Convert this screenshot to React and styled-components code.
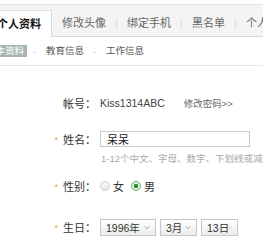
import styled, { createGlobalStyle } from 'styled-components';

const GlobalStyle = createGlobalStyle`
  html, body {
    margin: 0;
    padding: 0;
    background: #fff;
  }
  body {
    font-family: "Liberation Sans", "Noto Sans CJK SC", sans-serif;
    color: #333;
  }
`;

const Page = styled.div`
  width: 263px;
  height: 248px;
  overflow: hidden;
`;

const TabBar = styled.div`
  margin-top: 4px;
  height: 31px;
  display: flex;
  align-items: flex-end;
  background: #f4f4f4;
  border-top: 1px solid #e4e4e4;
  border-bottom: 1px solid #d8d8d8;
  white-space: nowrap;
`;

const Tab = styled.div`
  flex: none;
  height: 26px;
  line-height: 26px;
  padding: 0 10px;
  font-size: 11px;
  color: #666;
  ${(p) =>
    p.$active &&
    `
    margin-left: -13px;
    margin-bottom: -1px;
    background: #fff;
    color: #111;
    font-weight: bold;
    border-right: 1px solid #d8d8d8;
    border-top: 1px solid #e0e0e0;
    height: 26px;
  `}
`;

const TabSep = styled.span`
  flex: none;
  align-self: center;
  margin-top: 6px;
  width: 1px;
  height: 10px;
  background: #dedede;
`;

const SubNav = styled.div`
  height: 28px;
  display: flex;
  align-items: center;
  border-bottom: 1px solid #e8e8e8;
  white-space: nowrap;
  font-size: 9.5px;
`;

const SubItem = styled.span`
  flex: none;
  height: 12px;
  line-height: 12px;
  padding: 0 3px;
  color: ${(p) => (p.$active ? '#fff' : '#555')};
  background: ${(p) => (p.$active ? '#a7b6b5' : 'transparent')};
  margin-left: ${(p) => (p.$active ? '-17px' : '0')};
`;

const SubSep = styled.span`
  flex: none;
  width: 4px;
  margin: 0 6px;
  color: #ccc;
`;

const Form = styled.div`
  display: flex;
  flex-direction: column;
`;

const Row = styled.div`
  display: flex;
  align-items: center;
  height: ${(p) => p.$h}px;
  margin-top: ${(p) => p.$top}px;
  white-space: nowrap;
`;

const Label = styled.div`
  flex: none;
  width: 96px;
  padding-right: 4px;
  box-sizing: content-box;
  text-align: right;
  font-size: 11px;
  color: #333;
`;

const Star = styled.span`
  color: #e7a13a;
  font-size: 9px;
  margin-right: 5px;
  vertical-align: 1px;
`;

const Value = styled.span`
  font-size: 10.5px;
  color: #444;
`;

const SmallLink = styled.a`
  margin-left: 19px;
  font-size: 9.5px;
  color: #666;
  text-decoration: none;
`;

const TextInput = styled.input`
  box-sizing: border-box;
  width: 150px;
  height: 16px;
  margin: 0;
  padding: 0 6px;
  border: 1px solid #c9c9c9;
  font-family: inherit;
  font-size: 11px;
  color: #222;
  outline: none;
`;

const Hint = styled.div`
  margin-top: 5px;
  padding-left: 101px;
  height: 14px;
  line-height: 14px;
  font-size: 9.5px;
  color: #aaa;
  white-space: nowrap;
`;

const RadioDot = styled.span`
  flex: none;
  box-sizing: border-box;
  width: 10px;
  height: 10px;
  border-radius: 50%;
  border: 1px solid ${(p) => (p.$on ? '#6cb06c' : '#cfcfcf')};
  background: ${(p) =>
    p.$on
      ? 'radial-gradient(circle, #2f8f2f 0 2px, #e6f3e6 2.5px)'
      : 'linear-gradient(#fafafa, #e6e6e6)'};
  margin-right: 3px;
`;

const RadioText = styled.span`
  font-size: 11px;
  color: #333;
  margin-right: 7px;
`;

const SelectBox = styled.div`
  flex: none;
  box-sizing: border-box;
  display: flex;
  align-items: center;
  justify-content: space-between;
  width: ${(p) => p.$w}px;
  height: 17px;
  margin-right: 4px;
  padding: 0 5px 0 5px;
  border: 1px solid #c7c7c7;
  background: linear-gradient(#ffffff, #ececec);
  font-size: 10.5px;
  color: #333;
`;

const Arrow = () => (
  <svg width="6" height="5" viewBox="0 0 6 5">
    <path d="M0.5 1 L3 4 L5.5 1" fill="none" stroke="#b3b3b3" strokeWidth="1" />
  </svg>
);

const tabs = ['修改头像', '绑定手机', '黑名单', '个人主页'];

export default function App() {
  return (
    <Page>
      <GlobalStyle />
      <TabBar>
        <Tab $active>个人资料</Tab>
        {tabs.map((t, i) => (
          <span key={t} style={{ display: 'contents' }}>
            {i > 0 && <TabSep />}
            <Tab>{t}</Tab>
          </span>
        ))}
      </TabBar>
      <SubNav>
        <SubItem $active>基本资料</SubItem>
        <SubSep>-</SubSep>
        <SubItem>教育信息</SubItem>
        <SubSep>-</SubSep>
        <SubItem>工作信息</SubItem>
      </SubNav>
      <Form>
        <Row $h={20} $top={27}>
          <Label>帐号：</Label>
          <Value>Kiss1314ABC</Value>
          <SmallLink href="#">修改密码&gt;&gt;</SmallLink>
        </Row>
        <Row $h={16} $top={18}>
          <Label>
            <Star>*</Star>姓名：
          </Label>
          <TextInput readOnly value="呆呆" />
        </Row>
        <Hint>1-12个中文、字母、数字、下划线或减号</Hint>
        <Row $h={20} $top={10}>
          <Label>
            <Star>*</Star>性别：
          </Label>
          <RadioDot />
          <RadioText>女</RadioText>
          <RadioDot $on />
          <RadioText>男</RadioText>
        </Row>
        <Row $h={18} $top={22}>
          <Label>
            <Star>*</Star>生日：
          </Label>
          <SelectBox $w={56}>
            1996年
            <Arrow />
          </SelectBox>
          <SelectBox $w={37}>
            3月
            <Arrow />
          </SelectBox>
          <SelectBox $w={37}>
            13日
            <Arrow />
          </SelectBox>
        </Row>
      </Form>
    </Page>
  );
}
